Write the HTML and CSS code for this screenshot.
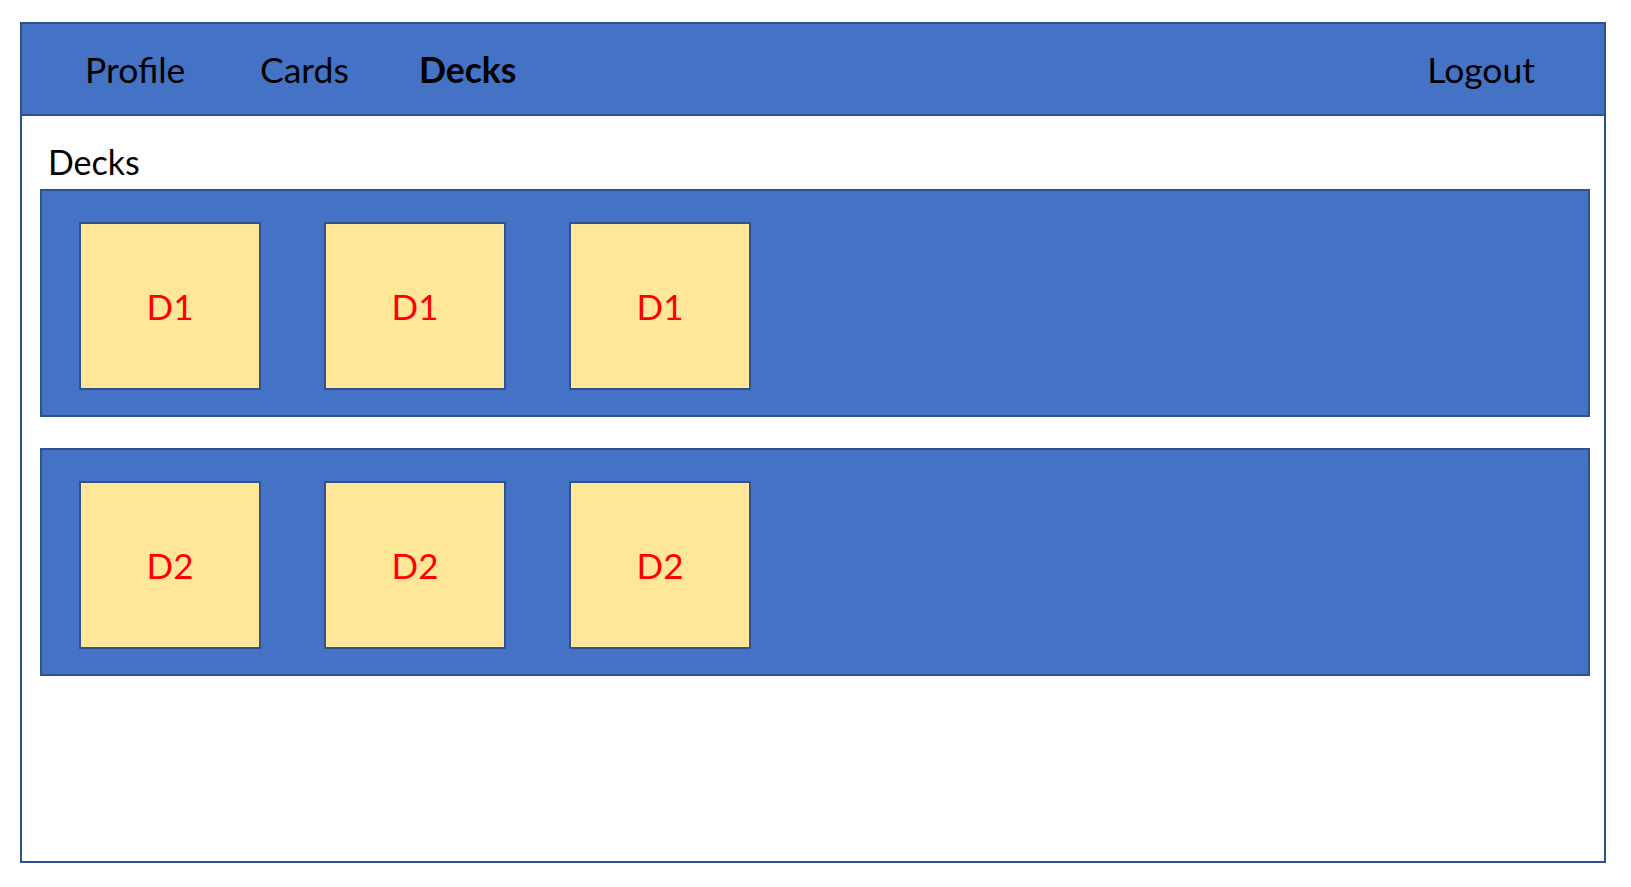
FILE: index.html
```html
<!DOCTYPE html>
<html lang="en">
<head>
<meta charset="utf-8">
<title>Decks</title>
<link rel="stylesheet" href="styles.css">
</head>
<body>
<div class="frame">
  <nav class="navbar">
    <a class="nav-link nav-profile">Profile</a>
    <a class="nav-link nav-cards">Cards</a>
    <a class="nav-link nav-decks active">Decks</a>
    <a class="nav-link nav-logout">Logout</a>
  </nav>
  <main class="content">
    <h1 class="page-title">Decks</h1>
    <section class="deck-row">
      <div class="deck-card">D1</div>
      <div class="deck-card">D1</div>
      <div class="deck-card">D1</div>
    </section>
    <section class="deck-row">
      <div class="deck-card">D2</div>
      <div class="deck-card">D2</div>
      <div class="deck-card">D2</div>
    </section>
  </main>
</div>
</body>
</html>
```

FILE: styles.css
```css
* { box-sizing: border-box; }

html, body {
  margin: 0;
  padding: 0;
  background: #ffffff;
}

body {
  font-family: Lato, "Open Sans", sans-serif;
  color: #000000;
}

.frame {
  margin: 22px 0 0 20px;
  width: 1586px;
  height: 841px;
  border: 2px solid #2f528f;
  background: #ffffff;
}

.navbar {
  display: flex;
  align-items: center;
  height: 92px;
  background: #4472c4;
  border-bottom: 2px solid #2f528f;
  padding: 0 69px 0 63px;
  font-size: 35.5px;
}

.nav-link {
  display: block;
  color: #000000;
  text-decoration: none;
  line-height: 1;
  padding-top: 1px;
}

.nav-profile { width: 175px; }
.nav-cards { width: 159px; }
.nav-decks { font-weight: 700; }
.nav-logout { margin-left: auto; }

.content {
  padding: 0 14px 0 18px;
}

.page-title {
  margin: 0;
  height: 73px;
  padding: 29px 0 0 8px;
  font-size: 34px;
  font-weight: 400;
  line-height: 1;
}

.deck-row {
  display: flex;
  gap: 63px;
  height: 228px;
  background: #4472c4;
  border: 2px solid #2f528f;
  padding: 31px 0 0 37px;
  margin-bottom: 31px;
}

.deck-card {
  display: flex;
  align-items: center;
  justify-content: center;
  width: 182px;
  height: 168px;
  background: #ffe699;
  border: 2px solid #2f528f;
  color: #ff0000;
  font-size: 35px;
}
```
